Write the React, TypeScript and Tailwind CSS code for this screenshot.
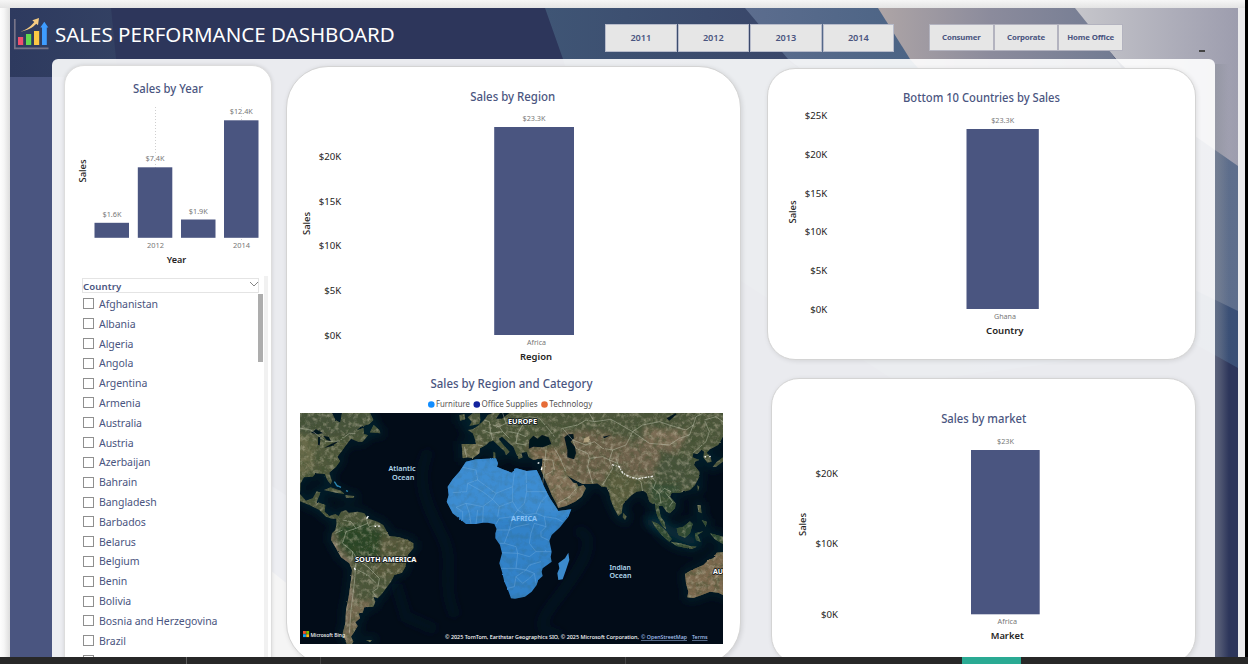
import React from "react";

const FONT = "'Noto Sans', 'Open Sans', sans-serif";

type LabelProps = {
  x: number;
  y: number;
  w?: number;
  size: number;
  fill?: string;
  weight?: number;
  anchor?: "start" | "middle" | "end";
  rotate?: boolean;
  children: string;
};

function Label({ x, y, w, size, fill = "#777777", weight = 400, anchor = "middle", rotate, children }: LabelProps) {
  return (
    <text
      x={x}
      y={y}
      fontSize={size}
      fill={fill}
      fontWeight={weight}
      textAnchor={anchor}
      textLength={w}
      lengthAdjust={w ? "spacingAndGlyphs" : undefined}
      fontFamily={FONT}
      transform={rotate ? `rotate(-90 ${x} ${y})` : undefined}
    >
      {children}
    </text>
  );
}

const TITLE = "#4a5580";
const BAR = "#4a5580";
const INK = "#252423";

function Backdrop() {
  return (
    <svg className="absolute inset-0" width="1248" height="657" viewBox="0 0 1248 657">
      <defs>
        <linearGradient id="edgeL" x1="0" x2="1" y1="0" y2="0">
          <stop offset="0" stopColor="#fdfdfd" />
          <stop offset=".4" stopColor="#f6f6f6" />
          <stop offset="1" stopColor="#dcdcdc" />
        </linearGradient>
        <linearGradient id="edgeT" x1="0" x2="0" y1="0" y2="1">
          <stop offset="0" stopColor="#f6f6f6" />
          <stop offset="1" stopColor="#e4e4e4" />
        </linearGradient>
        <linearGradient id="g1" x1="0" x2="1" y1="0" y2="0">
          <stop offset="0" stopColor="#2e3a5f" />
          <stop offset="1" stopColor="#334163" />
        </linearGradient>
        <linearGradient id="g2" gradientUnits="userSpaceOnUse" x1="545" x2="1238" y1="0" y2="0">
          <stop offset="0" stopColor="#3f5575" />
          <stop offset=".35" stopColor="#394669" />
          <stop offset="1" stopColor="#3b5076" />
        </linearGradient>
        <linearGradient id="g3" gradientUnits="userSpaceOnUse" x1="745" x2="1238" y1="0" y2="0">
          <stop offset="0" stopColor="#5c6d8e" />
          <stop offset=".33" stopColor="#4c6485" />
          <stop offset="1" stopColor="#5e6e8c" />
        </linearGradient>
        <linearGradient id="g4" x1="0" x2="1" y1="0" y2="0">
          <stop offset="0" stopColor="#aea5a6" />
          <stop offset=".45" stopColor="#8b8b9c" />
          <stop offset="1" stopColor="#6f7991" />
        </linearGradient>
        <linearGradient id="g5" x1="0" x2="1" y1="0" y2="0">
          <stop offset="0" stopColor="#c6c6cb" />
          <stop offset="1" stopColor="#9d9dae" />
        </linearGradient>
        <linearGradient id="glow" x1="0" x2="1" y1="0" y2="0">
          <stop offset="0" stopColor="#8b8f99" stopOpacity=".5" />
          <stop offset=".4" stopColor="#8b8f99" stopOpacity=".35" />
          <stop offset="1" stopColor="#8b8f99" stopOpacity="0" />
        </linearGradient>
      </defs>
      <rect width="1248" height="657" fill="#f4f4f4" />
      <rect width="1248" height="8" fill="url(#edgeT)" />
      <rect y="8" width="10" height="649" fill="url(#edgeL)" />
      <rect x="1238" y="8" width="7" height="649" fill="#ececee" />
      <rect x="10" y="8" width="1228" height="649" fill="#2d365b" />
      <path d="M10 8H111L116 59L122 90H10Z" fill="url(#g1)" />
      <path d="M545 8H750L792 64L1238 300V368L1195 344L900 384L741 281L640 217L575 100L563 59Z" fill="url(#g2)" />
      <path d="M745 8H885L1238 150V311L1195 290L960 190L788 59Z" fill="url(#g3)" />
      <path d="M878 8H1080L1130 80L1000 160L910 59Z" fill="url(#g4)" />
      <path d="M1075 8H1238V166L1195 136L1116 59Z" fill="url(#g5)" />
      <path d="M10 77H64V657H10Z" fill="#4a5580" />
      <path d="M260 478L740 800H260Z" fill="#4a5580" />
      <path d="M260 562L420 690H260Z" fill="#9c9c9c" />
      <rect x="1215" y="64" width="14" height="593" fill="url(#glow)" />
      <rect x="1245" width="3" height="657" fill="#000000" />
    </svg>
  );
}

function Logo() {
  return (
    <svg width="36" height="36" viewBox="13 16 36 36" className="shrink-0">
      <path d="M14.8 19V48.3H48.5" fill="none" stroke="#777488" strokeWidth="1.7" />
      <rect x="18" y="37" width="5.2" height="8" fill="#f0506e" />
      <rect x="26" y="34" width="5.2" height="11" fill="#62d84e" />
      <rect x="34" y="31" width="5.2" height="14" fill="#fcc844" />
      <path d="M42 45V27.5H40.3L44.3 21.8L48.3 27.5H46.8V45Z" fill="#3e9cff" />
      <path d="M20 31.6C27 31 33 27.500 36.300 23.800L38 25.300L39 18L32.300 20.300L34.300 21.900C31 26 26.500 29.800 20 31.600Z" fill="#f4cb82" />
    </svg>
  );
}

function Slicer({ items, cell, group }: { items: string[]; cell: string; group: string }) {
  return (
    <div className={group}>
      {items.map((t) => (
        <div key={t} className={cell}>
          {t}
        </div>
      ))}
    </div>
  );
}

function YearChart() {
  const bars = [
    { x: 94.5, y: 222.8, c: 112, v: "$1.6K" },
    { x: 137.8, y: 167.3, c: 155, v: "$7.4K" },
    { x: 181, y: 219.5, c: 198.3, v: "$1.9K" },
    { x: 224, y: 120.3, c: 241.3, v: "$12.4K" },
  ];
  return (
    <svg width="205" height="205" viewBox="65 66 205 205" className="shrink-0">
      <Label x={168} y={93} w={70} size={12} fill={TITLE} weight={500}>Sales by Year</Label>
      <path d="M155.500 107V238M241.500 107V241" stroke="#cfcfcf" strokeDasharray="1 2" />
      {bars.map((b) => (
        <g key={b.v}>
          <rect x={b.x} y={b.y} width="34.500" height={237.8 - b.y} fill={BAR} />
          <rect x={b.c - 10} y={b.y - 13} width="20" height="9" fill="#ffffff" fillOpacity=".6" />
          <Label x={b.c} y={b.y - 6} w={b.v.length > 5 ? 23 : 19} size={7.7}>{b.v}</Label>
        </g>
      ))}
      <Label x={155.500} y={248} w={17} size={7.7}>2012</Label>
      <Label x={241.500} y={248} w={17} size={7.7}>2014</Label>
      <Label x={176.500} y={263} w={19.500} size={9.3} fill={INK} weight={600}>Year</Label>
      <Label x={86} y={171} w={23} size={9.3} fill={INK} weight={500} rotate>Sales</Label>
    </svg>
  );
}

const COUNTRIES = [
  "Afghanistan", "Albania", "Algeria", "Angola", "Argentina", "Armenia", "Australia", "Austria", "Azerbaijan",
  "Bahrain", "Bangladesh", "Barbados", "Belarus", "Belgium", "Benin", "Bolivia", "Bosnia and Herzegovina", "Brazil",
];

function CountryList() {
  return (
    <div className="ml-[9px] mt-[5px] w-[194px] flex-1 border-r-[4px] border-[#f1f1f1] pl-2">
      <div className="mt-[2px] flex h-[15px] w-[177px] items-center justify-between border border-[#e4e4e4]">
        <span className="mt-[2px] text-[9.600px] font-semibold leading-[15px] tracking-[0.1px] text-[#4a5580]">Country</span>
        <svg width="10" height="8" viewBox="0 0 10 8" className="mb-[3px] -mr-px">
          <path d="M1 2L5 6L9 2" fill="none" stroke="#777777" strokeWidth=".9" />
        </svg>
      </div>
      <div className="flex justify-between">
        <div className="pt-[1px]">
          {COUNTRIES.map((c) => (
            <div key={c} className="flex h-[19.82px] items-center gap-[5px] pl-px">
              <span className="size-[11px] shrink-0 border border-[#8f8f8f]" />
              <span className="mt-px whitespace-nowrap text-[10.500px] leading-[19px] tracking-[-0.05px] text-[#4a5580]">{c}</span>
            </div>
          ))}
          <div className="flex h-[19.82px] items-center pl-px">
            <span className="size-[11px] shrink-0 border border-[#8f8f8f]" />
          </div>
        </div>
        <div className="mr-[1px] mt-[1px] h-[68px] w-[5px] bg-[#adadad]" />
      </div>
    </div>
  );
}

type Tick = { t: string; y: number };
type ColumnProps = {
  box: [number, number, number, number];
  title: string;
  titleX: number;
  titleY: number;
  titleW: number;
  bar: [number, number, number, number];
  value: string;
  valueX: number;
  valueY: number;
  cat: string;
  catX: number;
  catY: number;
  catW: number;
  axis: string;
  axisX: number;
  axisY: number;
  axisW: number;
  tickX: number;
  ticks: Tick[];
  salesX: number;
  salesY: number;
};

function ColumnChart(p: ColumnProps) {
  return (
    <svg width={p.box[2]} height={p.box[3]} viewBox={p.box.join(" ")} className="shrink-0">
      <Label x={p.titleX} y={p.titleY} w={p.titleW} size={12} fill={TITLE} weight={500}>{p.title}</Label>
      <rect x={p.bar[0]} y={p.bar[1]} width={p.bar[2]} height={p.bar[3]} fill={BAR} />
      <Label x={p.valueX} y={p.valueY} w={p.value.length > 4 ? 23 : 17} size={7.7}>{p.value}</Label>
      <Label x={p.catX} y={p.catY} w={p.catW} size={7.7}>{p.cat}</Label>
      <Label x={p.axisX} y={p.axisY} w={p.axisW} size={9.5} fill={INK} weight={600}>{p.axis}</Label>
      {p.ticks.map((k) => (
        <Label key={k.t} x={p.tickX} y={k.y + 3.5} w={k.t.length > 3 ? 22.5 : 17} size={9.6} fill={INK} anchor="end">{k.t}</Label>
      ))}
      <Label x={p.salesX} y={p.salesY} w={23} size={9.3} fill={INK} weight={500} rotate>Sales</Label>
    </svg>
  );
}

const AMERICAS =
  "M12 129H108L118 150L133 158L138 129H222L232 150L220 162L193 170L180 182L202 174L204 192L216 196L200 215L188 216L165 206L150 225L138 242L124 260L132 274L120 290L100 308L108 334L104 343L94 330L86 312L60 310L50 320L24 322L14 340L12 372L30 392L50 385L62 364L74 368L62 395L88 405L86 425L100 438L118 432L128 438L135 425L150 420L158 428L185 425L205 430L215 445L245 455L262 465L270 480L280 498L310 502L335 510L352 520L352 535L335 555L328 590L318 608L295 615L285 635L270 655L255 675L245 685L232 680L238 695L232 710L205 712L200 728L188 730L192 745L178 757L185 768L172 790L165 800L172 815L168 822H152L140 790L148 760L150 720L158 680L165 630L168 600L160 580L135 562L120 535L105 510L108 490L118 480L122 460L120 446L108 446L90 440L70 420L40 405L12 394Z";
const EURASIA =
  "M590 129L575 135L565 150L545 168L530 178L515 180L530 190L536 205L540 222L497 222L500 265L515 262L530 265L550 250L552 235L570 225L580 215L592 212L605 225L625 243L630 256L641 245L625 228L608 206L618 200L634 215L652 230L660 250L668 268L680 262L676 248L692 246L698 262L712 270L728 266L740 265L738 285L734 298L744 322L757 350L767 375L780 398L787 414L810 408L837 395L857 380L870 355L862 345L847 350L842 340L832 338L814 316L810 311L822 322L842 333L860 342L882 342L904 340L917 350L932 352L940 370L944 390L954 415L967 438L977 430L980 405L987 395L1007 375L1022 365L1042 362L1052 370L1060 395L1070 402L1077 400L1080 425L1087 445L1100 468L1110 478L1105 455L1094 440L1090 420L1088 408L1100 408L1112 425L1122 430L1137 415L1139 400L1122 380L1127 368L1152 368L1182 360L1197 345L1210 320L1210 305L1194 285L1197 275L1210 270L1190 262L1192 250L1204 252L1217 240L1224 245L1222 262L1234 278L1247 275L1244 262L1232 248L1242 238L1267 225L1281 200V129Z";
const ISLANDS =
  "M515 142L530 130H552L553 150L550 162L520 168L527 155ZM490 135L505 132L508 148L492 152ZM233 165L250 180L253 190L222 187ZM84 360L104 352L135 362L146 372L120 368ZM148 375L175 378L172 384L150 383ZM1067 453L1087 462L1112 485L1127 507L1120 515L1097 495L1077 470ZM1124 515L1152 520L1182 528L1202 530L1187 537L1142 528ZM1142 475L1162 470L1182 454L1190 462L1182 490L1167 503L1147 495ZM1197 490L1222 484L1205 494L1214 516L1200 510ZM1204 405L1214 405L1217 430L1207 425ZM1217 450L1232 455L1230 470ZM1242 490L1281 500V522L1257 508ZM982 428L992 440L987 450L980 442ZM1204 346L1210 350L1206 364ZM1250 290L1262 276L1281 262V275L1260 290ZM592 245L598 248L598 268L592 265ZM210 810L228 810L222 817Z";
const AUSTRALIA =
  "M1290 545L1262 548L1252 565L1237 570L1222 585L1187 600L1167 612L1170 640L1177 665L1174 682L1192 684L1217 675L1242 665L1267 668L1290 680Z";
const AFRICA =
  "M510 275L540 268L600 265L606 280L603 290L620 298L648 308L656 296L662 295L692 303L722 300L732 320L742 345L754 370L762 385L780 412L787 423L826 418L817 440L792 472L767 495L760 512L767 545L764 560L767 575L740 595L737 605L740 618L727 630L722 645L707 665L687 680L657 686L645 685L636 660L625 635L618 605L610 580L618 550L612 525L598 505L598 490L602 478L595 462L575 458L560 458L540 462L510 462L495 450L470 430L460 410L452 395L458 375L455 350L470 328L490 305L500 290Z";
const MADAGASCAR = "M817 548L820 570L810 600L800 628L787 630L784 610L790 595L787 580L807 565Z";
const AFRICA_BORDERS =
  "M500 292L540 300L545 330L515 340L512 365L470 368M515 340L560 365L590 388L560 410L510 400L480 412M545 330L600 370L650 350L655 310M600 370L590 388L610 410L650 395V350M650 395L665 420L650 440L610 445L600 462M610 410L605 440M540 462L545 420M525 462L520 430L510 400M560 458L562 410M480 412L500 425L500 450M690 303L692 365H752M692 365L685 400L665 420L690 435L720 430L735 395L755 375M720 430L745 440L780 445L800 455M745 440L750 470L735 485V500L760 512M690 435L715 460L750 470M715 460L705 490L700 520L720 545L765 545M600 480H640L650 440M640 480L660 470L700 462M640 480L625 520H612M625 520L660 530L665 550L700 560L720 545M618 548L665 550L660 595H615M660 595L690 600L700 585L735 575M690 600L660 620L655 650L635 655M660 620L680 640L700 625L715 610L690 600M715 610L720 640";
const WORLD_BORDERS =
  "M12 175L45 180L90 215L130 213L160 190L178 190M140 450L165 455L180 475L150 485L140 520L170 545L168 570M180 475L215 460L220 470L245 465M215 460L210 440M235 470L238 458M118 490L140 480M170 545L185 570L215 590L230 605L250 625L245 655L230 665L240 680M180 575L175 640L165 720L160 790M185 600L215 615L240 640M505 230L512 262M545 225L560 227M560 180L585 190L590 210M565 150L580 155L585 190L620 185L610 170L590 165M620 129L630 160L610 170M630 160L665 150L680 165L665 190L690 200M640 185L665 190L660 220L690 225M620 185L640 205M665 150L700 140L730 145L760 180L775 200M800 175L845 165L870 150L895 155L880 130M895 155L945 148L975 165L1010 185L1040 165L1090 155L1120 165L1170 180L1192 165L1200 140L1220 130M1010 185L990 225L950 240L920 235L895 215L870 225L830 210L800 175M1010 185L1060 220L1120 225L1150 205L1180 195L1192 165M950 240L940 270L965 280L978 310L1020 325L1065 320L1080 335L1072 355L1090 370M890 340L875 290L880 265L920 260L940 270M940 270L950 295L935 320L920 345M965 280L960 265M830 210L840 235L875 250L880 265M775 235L790 260L810 305M740 268L770 270L775 300L750 315M785 400L820 380L845 350M1040 365L1035 335L1020 325M1090 370L1105 355L1125 365M1090 370L1095 400M1110 370L1130 395L1120 410M1192 248L1230 215L1240 185L1225 150L1260 140L1281 155M740 345L750 240M1225 260L1240 255";

function WorldMap() {
  return (
    <svg width="423" height="231" viewBox="0 0 423 231" className="ml-[13px] shrink-0">
      <defs>
        <filter id="rough" x="-5%" y="-5%" width="110%" height="110%">
          <feTurbulence type="fractalNoise" baseFrequency=".13" numOctaves="3" seed="4" result="n" />
          <feDisplacementMap in="SourceGraphic" in2="n" scale="5" xChannelSelector="R" yChannelSelector="G" />
        </filter>
        <filter id="soft" x="-20%" y="-20%" width="140%" height="140%">
          <feGaussianBlur stdDeviation="7" />
        </filter>
        <filter id="blurBig" x="-30%" y="-30%" width="160%" height="160%">
          <feGaussianBlur stdDeviation="14" />
        </filter>
        <filter id="grain" x="0" y="0" width="100%" height="100%">
          <feTurbulence type="fractalNoise" baseFrequency=".055" numOctaves="5" seed="11" />
          <feColorMatrix values="0 0 0 0 .05  0 0 0 0 .08  0 0 0 0 .03  2.6 0 0 0 -1.1" />
        </filter>
        <filter id="grainLight" x="0" y="0" width="100%" height="100%">
          <feTurbulence type="fractalNoise" baseFrequency=".07" numOctaves="5" seed="31" />
          <feColorMatrix values="0 0 0 0 .62  0 0 0 0 .57  0 0 0 0 .43  0 2.2 0 0 -1" />
        </filter>
        <clipPath id="land">
          <path d={AMERICAS} />
          <path d={EURASIA} />
          <path d={ISLANDS} />
          <path d={AUSTRALIA} />
        </clipPath>
        <clipPath id="africaClip">
          <path d={AFRICA} />
        </clipPath>
      </defs>
      <rect width="423" height="231" fill="#020c18" />
      <g transform="translate(-4 -43) scale(.33333)">
        <g filter="url(#blurBig)" stroke="#08303c" strokeOpacity=".5" fill="none" strokeWidth="20">
          <path d={AMERICAS} />
          <path d={EURASIA} />
          <path d={ISLANDS} />
          <path d={AUSTRALIA} />
        </g>
        <g filter="url(#blurBig)" fill="none" stroke="#0a2431" strokeOpacity=".28" strokeWidth="34">
          <path d="M400 240C350 330 400 420 440 500S430 640 480 740" />
          <path d="M840 480C920 500 850 600 780 690S740 780 800 800" />
          <path d="M1050 450L1140 490L1200 520" stroke="#12404c" strokeOpacity=".6" strokeWidth="26" />
          <path d="M300 640L330 740L420 780" />
        </g>
        <g filter="url(#rough)">
          <g clipPath="url(#land)">
            <rect x="0" y="120" width="1300" height="710" fill="#4d563b" />
            <g filter="url(#soft)">
              <path d="M0 120H260V200H0Z" fill="#46523a" />
              <path d="M0 190L60 200L50 300L0 330Z" fill="#686a48" />
              <path d="M60 210H160V300L60 310Z" fill="#50593a" />
              <path d="M125 470L210 460L270 500L250 560L170 560L130 520Z" fill="#2a4527" />
              <path d="M255 500H360V620H230L250 570Z" fill="#56583b" />
              <path d="M105 480L130 540L165 575L175 700L160 822H140L150 600L100 540Z" fill="#7e6e5b" />
              <path d="M160 690L230 690L190 822H150Z" fill="#73684f" />
              <path d="M495 215H560V270H495Z" fill="#69684a" />
              <path d="M690 230L790 235L840 290L920 350H850L870 400L780 425L730 300Z" fill="#74634a" />
              <path d="M740 270L860 330L870 370L790 420L740 330Z" fill="#7f6e54" />
              <path d="M800 185L900 180L1010 210L960 270L920 345L830 330L790 250Z" fill="#6c614a" />
              <path d="M980 240L1060 190L1180 180L1150 240L1080 320L1000 320L950 270Z" fill="#70634e" />
              <path d="M1040 175L1180 180L1150 225L1060 230Z" fill="#7b6d55" />
              <path d="M930 300L980 310L1050 330L1010 375L970 440L940 380Z" fill="#5a5d3d" />
              <path d="M1100 240L1220 280L1200 350L1120 370L1070 320Z" fill="#46533a" />
              <path d="M1060 340H1150V480H1080Z" fill="#394f36" />
              <path d="M1070 450H1281V540H1070Z" fill="#2e4931" />
              <path d="M1160 540H1290V690H1160Z" fill="#7b6950" />
            </g>
            <rect x="0" y="120" width="1300" height="710" filter="url(#grain)" opacity=".5" />
            <rect x="0" y="120" width="1300" height="710" filter="url(#grainLight)" opacity=".5" />
          </g>
          <g fill="#04141f">
            <path d="M700 210L712 197L725 206L738 195L758 202L766 222L740 232L712 230L698 236Z" />
            <path d="M805 202L817 193L832 192L834 205L824 215L837 230L840 250L834 268L814 262V240Z" />
            <path d="M45 188L60 178L82 190L62 193ZM66 202L74 200L71 226L66 224ZM82 198L98 200L105 214L92 210ZM84 234L105 222L130 212L108 228Z" />
            <path d="M612 129L640 129L618 146L600 146Z" />
            <path d="M920 200L945 195L925 205Z" />
            <path d="M1112 145L1138 130L1142 133L1120 152Z" />
          </g>
          <path d="M865 205L880 198L880 215L862 218Z" fill="#c7b690" fillOpacity=".7" />
          <path d={WORLD_BORDERS} fill="none" stroke="#c9ccb8" strokeOpacity=".55" strokeWidth="2.400" strokeLinejoin="round" />
          <path d="M948 284L970 290L980 308L1000 321L1025 327L1050 322L1074 318" fill="none" stroke="#ffffff" strokeOpacity=".85" strokeWidth="4" strokeDasharray="7 4 3 5" />
          <path d="M725 280L730 278M738 292L736 300M175 593L178 600M212 446L217 438M236 470L240 469M247 469L251 468M1226 261L1230 260M1240 260L1244 259" stroke="#ffffff" strokeWidth="4" />
          <path d="M115 335L125 350M120 345L135 352M150 362L156 364" stroke="#2c86b0" strokeWidth="4" />
          <path d={AFRICA} fill="#3282c8" />
          <g clipPath="url(#africaClip)">
            <rect x="440" y="260" width="400" height="180" fill="#4292d6" filter="url(#blurBig)" opacity=".7" />
            <rect x="440" y="260" width="400" height="440" filter="url(#grain)" opacity=".13" />
          </g>
          <path d={MADAGASCAR} fill="#3b8acc" />
          <path d={AFRICA_BORDERS} fill="none" stroke="#80b8e8" strokeOpacity=".5" strokeWidth="2" strokeLinejoin="round" />
        </g>
      </g>
      <g fontFamily={FONT} fontWeight="700" fill="#ffffff" stroke="#10181c" strokeWidth="1.600" paintOrder="stroke" strokeLinejoin="round">
        <text x="208" y="10.800" fontSize="7" textLength="29" lengthAdjust="spacingAndGlyphs">EUROPE</text>
        <text x="55" y="149" fontSize="7" textLength="61.500" lengthAdjust="spacingAndGlyphs">SOUTH AMERICA</text>
        <text x="413" y="160.500" fontSize="7">AU</text>
      </g>
      <text x="211" y="108" fontSize="7" fontWeight="700" fontFamily={FONT} fill="#8cc4f6" textLength="26" lengthAdjust="spacingAndGlyphs">AFRICA</text>
      <g fontFamily={FONT} fontWeight="600" fontSize="7.500" fill="#b3d9ee">
        <text x="88.500" y="58" textLength="27" lengthAdjust="spacingAndGlyphs">Atlantic</text>
        <text x="92" y="66.500" textLength="22.500" lengthAdjust="spacingAndGlyphs">Ocean</text>
        <text x="309.500" y="156.500" textLength="21.500" lengthAdjust="spacingAndGlyphs">Indian</text>
        <text x="309.500" y="165" textLength="22" lengthAdjust="spacingAndGlyphs">Ocean</text>
      </g>
      <rect x="3" y="218" width="2.900" height="2.900" fill="#f0532a" />
      <rect x="6.200" y="218" width="2.900" height="2.900" fill="#7fba00" />
      <rect x="3" y="221.200" width="2.900" height="2.900" fill="#12a4ef" />
      <rect x="6.200" y="221.200" width="2.900" height="2.900" fill="#fcb813" />
      <g fontFamily={FONT} fontSize="5.600" fontWeight="500" fill="#ffffff">
        <text x="10.500" y="224" textLength="34.500" lengthAdjust="spacingAndGlyphs">Microsoft Bing</text>
        <text x="145" y="226" textLength="194" lengthAdjust="spacingAndGlyphs">© 2025 TomTom, Earthstar Geographics SIO, © 2025 Microsoft Corporation,</text>
        <text x="341" y="226" fill="#a9c4f5" textLength="46" lengthAdjust="spacingAndGlyphs">© OpenStreetMap</text>
        <text x="392" y="226" fill="#a9c4f5" textLength="15.500" lengthAdjust="spacingAndGlyphs">Terms</text>
        <path d="M341 227.500H387M392 227.500H407.500" stroke="#a9c4f5" strokeWidth=".5" />
      </g>
    </svg>
  );
}

function Legend() {
  return (
    <svg width="453" height="38" viewBox="287 375 453 38" className="shrink-0">
      <Label x={511.500} y={388} w={162} size={12} fill={TITLE} weight={500}>Sales by Region and Category</Label>
      <circle cx="431.300" cy="404.500" r="3.300" fill="#118dff" />
      <Label x={436} y={407.300} w={34} size={8.6} fill="#555453" anchor="start">Furniture</Label>
      <circle cx="476.800" cy="404.500" r="3.300" fill="#12239e" />
      <Label x={481.500} y={407.300} w={56} size={8.6} fill="#555453" anchor="start">Office Supplies</Label>
      <circle cx="544.500" cy="404.500" r="3.300" fill="#e66c37" />
      <Label x={549.300} y={407.300} w={43} size={8.6} fill="#555453" anchor="start">Technology</Label>
    </svg>
  );
}

export default function App() {
  return (
    <div className="flex h-[664px] w-[1248px] flex-col overflow-hidden font-['Noto_Sans','Open_Sans',sans-serif]">
      <div className="relative h-[657px] shrink-0 overflow-hidden">
        <Backdrop />
        <div className="relative">
          <header className="flex h-[59px] pl-[13px] pt-4">
            <Logo />
            <h1 className="ml-[6px] mt-[4px] w-[550px] shrink-0 whitespace-nowrap text-[20.500px] leading-[28px] text-white">SALES PERFORMANCE DASHBOARD</h1>
            <Slicer
              group="mt-[8px] flex h-7 w-[289px] shrink-0 gap-px"
              cell="flex flex-1 items-center justify-center border border-[#b8bccb] bg-[#e6e6e6] text-[9.2px] font-semibold tracking-[-0.1px] text-[#4a5580]"
              items={["2011", "2012", "2013", "2014"]}
            />
            <Slicer
              group="ml-[35px] mt-[8px] flex h-[27px] w-[194px] shrink-0"
              cell="flex flex-1 items-center justify-center whitespace-nowrap border border-[#b3b3bf] bg-[#e6e6e6] pt-px text-[7.8px] font-bold tracking-[-0.14px] text-[#4a5580]"
              items={["Consumer", "Corporate", "Home Office"]}
            />
            <div className="ml-[76px] mt-[34px] h-[2px] w-[6px] bg-[#444444]" />
          </header>
          <main className="ml-[52px] flex h-[620px] w-[1163px] rounded-t-[6px] bg-white/90 pl-3">
            <section className="mt-[6px] flex w-[208px] shrink-0 flex-col overflow-hidden rounded-[20px] border border-[#dddddd] bg-white shadow-[0_0_4px_rgba(0,0,0,0.12)]">
              <YearChart />
              <CountryList />
            </section>
            <section className="ml-[14px] mt-[7px] flex h-[599px] w-[455px] shrink-0 flex-col rounded-[42px] border border-[#d4d4d4] bg-white shadow-[1px_1px_5px_rgba(0,0,0,0.12)]">
              <ColumnChart
                box={[287, 67, 453, 308]}
                title="Sales by Region" titleX={512.700} titleY={101} titleW={85}
                bar={[494.200, 127, 79.800, 208]}
                value="$23.3K" valueX={534} valueY={120.800}
                cat="Africa" catX={536.500} catY={345.300} catW={19}
                axis="Region" axisX={536} axisY={360} axisW={32}
                tickX={341.300}
                ticks={[{ t: "$20K", y: 156.5 }, { t: "$15K", y: 201.5 }, { t: "$10K", y: 245.7 }, { t: "$5K", y: 290.7 }, { t: "$0K", y: 335.5 }]}
                salesX={310.300} salesY={223.500}
              />
              <Legend />
              <WorldMap />
            </section>
            <div className="ml-[26px] mt-[9px] flex shrink-0 flex-col">
              <section className="h-[292px] w-[429px] rounded-[28px] border border-[#d4d4d4] bg-white shadow-[1px_1px_5px_rgba(0,0,0,0.1)]">
                <ColumnChart
                  box={[768, 69, 427, 290]}
                  title="Bottom 10 Countries by Sales" titleX={981.500} titleY={102} titleW={157}
                  bar={[966.500, 129, 72.300, 180]}
                  value="$23.3K" valueX={1002.700} valueY={122.800}
                  cat="Ghana" catX={1005} catY={319.300} catW={22}
                  axis="Country" axisX={1004.800} axisY={334} axisW={37.500}
                  tickX={827.300}
                  ticks={[{ t: "$25K", y: 115.7 }, { t: "$20K", y: 154.6 }, { t: "$15K", y: 193.5 }, { t: "$10K", y: 231.8 }, { t: "$5K", y: 270.6 }, { t: "$0K", y: 309.5 }]}
                  salesX={796} salesY={212}
                />
              </section>
              <section className="ml-[4px] mt-[18px] h-[286px] w-[425px] rounded-[28px] border border-[#d4d4d4] bg-white shadow-[1px_1px_5px_rgba(0,0,0,0.1)]">
                <ColumnChart
                  box={[772, 379, 423, 280]}
                  title="Sales by market" titleX={983.700} titleY={423} titleW={85}
                  bar={[971, 450, 68.700, 164.300]}
                  value="$23K" valueX={1005.500} valueY={444}
                  cat="Africa" catX={1007.300} catY={624} catW={19.500}
                  axis="Market" axisX={1007.200} axisY={639} axisW={33}
                  tickX={838}
                  ticks={[{ t: "$20K", y: 473.7 }, { t: "$10K", y: 543.7 }, { t: "$0K", y: 614.6 }]}
                  salesX={806} salesY={524.500}
                />
              </section>
            </div>
          </main>
        </div>
      </div>
      <footer className="flex h-[7px] shrink-0 bg-[#282828]">
        <div className="w-[187px] border-r border-[#5c5c5c]" />
        <div className="w-[134px] border-r border-[#454545]" />
        <div className="w-[305px] border-r border-[#454545]" />
        <div className="ml-[336px] w-[59px] bg-[#2aaa93]" />
      </footer>
    </div>
  );
}
